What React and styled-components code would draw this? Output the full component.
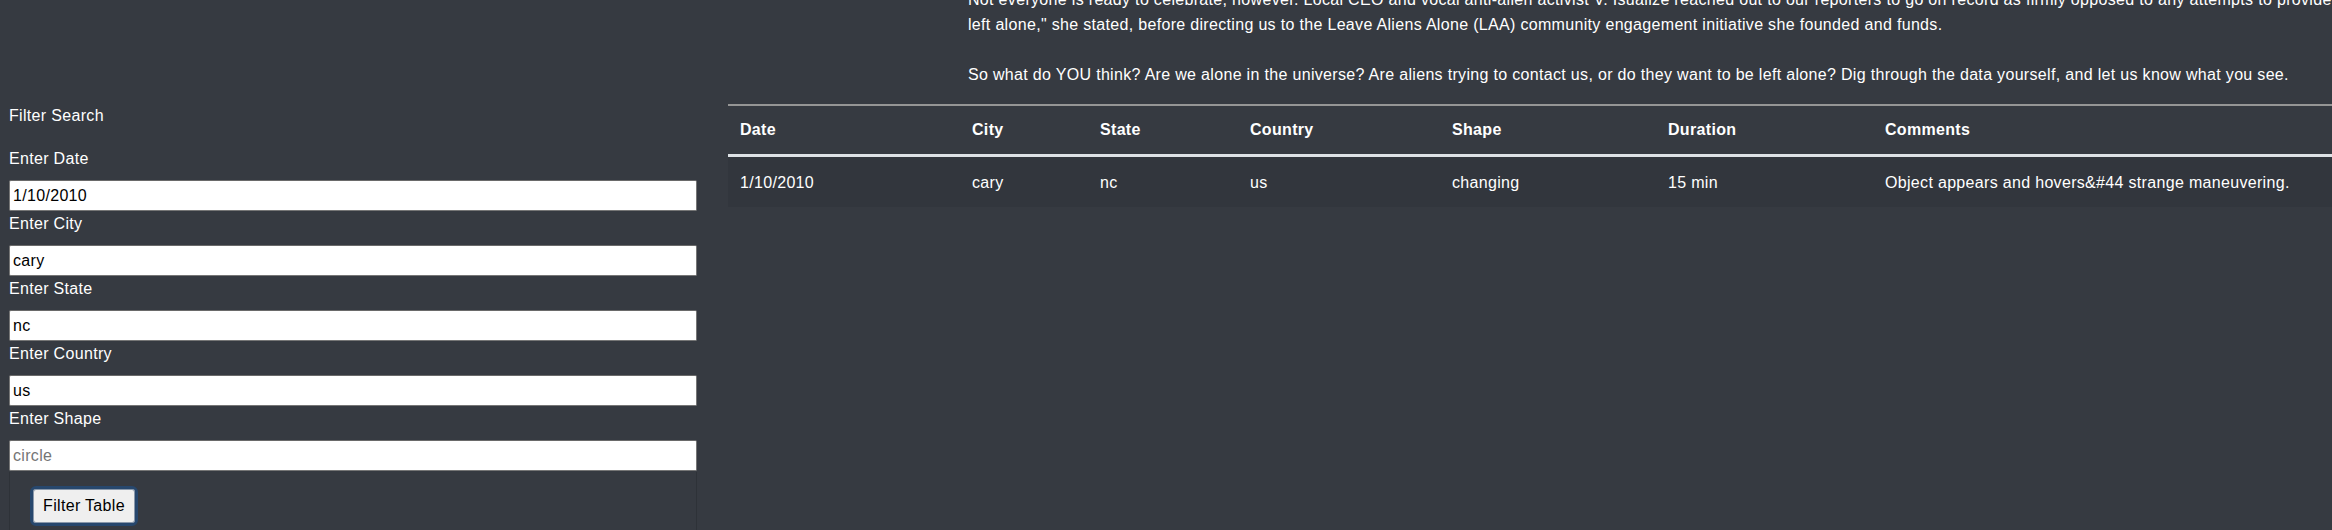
import styled, { createGlobalStyle } from "styled-components";

const GlobalStyle = createGlobalStyle`
  html, body{
    margin: 0;
    padding: 0;
    background: #363a41;
  }
  body{
    font-family: "Liberation Sans", Arial, sans-serif;
    font-size: 16px;
    letter-spacing: 0.32px;
    color: #ffffff;
  }
`
const Page = styled.main`
  width: 2332px;
  height: 530px;
  overflow: hidden;
  background: #363a41;
`
const Story = styled.p`
  margin: -13px 0 17px 968px;
  line-height: 25px;
  white-space: nowrap;
`
const Row = styled.section`
  display: flex;
  gap: 31px;
  align-items: flex-start;
`
const Sidebar = styled.aside`
  box-sizing: border-box;
  width: 697px;
  padding-left: 9px;
  flex-shrink: 0;
  display: flex;
  flex-direction: column;
`
const SideTitle = styled.div`
  line-height: 24px;
  margin-bottom: 19px;
`
const Label = styled.label`
  display: block;
  line-height: 24px;
  margin-bottom: 9px;
`
const Input = styled.input`
  box-sizing: border-box;
  display: block;
  width: 688px;
  height: 31px;
  margin: 0 0 1px;
  padding: 1px 3px;
  border: 1px solid #767676;
  border-top-color: #6a6a6a;
  border-radius: 2px;
  background: #ffffff;
  color: #000000;
  font-family: "Liberation Sans", Arial, sans-serif;
  font-size: 16px;
  letter-spacing: 0.32px;
  &::placeholder{
    color: #757575;
  }
`
const ButtonBox = styled.div`
  width: 688px;
  box-sizing: border-box;
  height: 80px;
  padding: 14px 0 0 20px;
  border-left: 1px solid #2e3238;
  border-right: 1px solid #2e3238;
`
const Button = styled.button`
  box-sizing: border-box;
  width: 108px;
  height: 40px;
  padding: 0;
  border: 3px solid #27476d;
  border-radius: 6px;
  background: #efefef;
  color: #000000;
  font-family: "Liberation Sans", Arial, sans-serif;
  font-size: 16px;
  letter-spacing: 0.32px;
  box-shadow: inset 0 0 0 1px #8a98aa;
`
const TableWrap = styled.div`
  flex: 1;
`
const Table = styled.table`
  width: 100%;
  table-layout: fixed;
  border-collapse: collapse;
`
const Th = styled.th`
  box-sizing: border-box;
  width: ${props => props.w ? props.w + "px" : "auto"};
  padding: 12px;
  text-align: left;
  font-weight: 700;
  line-height: 24px;
  border-top: 2px solid #959595;
  border-bottom: 3px solid #dee2e6;
`
const Td = styled.td`
  padding: 14px 12px 12px;
  line-height: 24px;
  white-space: nowrap;
  background: #32363d;
`

const columns = [
  { name: "Date", w: 232 },
  { name: "City", w: 128 },
  { name: "State", w: 150 },
  { name: "Country", w: 202 },
  { name: "Shape", w: 216 },
  { name: "Duration", w: 217 },
  { name: "Comments" },
]

const sightings = [
  ["1/10/2010", "cary", "nc", "us", "changing", "15 min", "Object appears and hovers&#44 strange maneuvering."],
]

const filters = [
  { id: "datetime", label: "Enter Date", value: "1/10/2010" },
  { id: "city", label: "Enter City", value: "cary" },
  { id: "state", label: "Enter State", value: "nc" },
  { id: "country", label: "Enter Country", value: "us" },
  { id: "shape", label: "Enter Shape", placeholder: "circle" },
]

function App(){
  return(
    <Page>
      <GlobalStyle />
      <Story>
        Not everyone is ready to celebrate, however. Local CEO and vocal anti-alien activist V. Isualize reached out to our reporters to go on record as firmly opposed to any attempts to provide aliens with a welcome. "They're here, and they want to be<br />
        left alone," she stated, before directing us to the Leave Aliens Alone (LAA) community engagement initiative she founded and funds.<br />
        <br />
        So what do YOU think? Are we alone in the universe? Are aliens trying to contact us, or do they want to be left alone? Dig through the data yourself, and let us know what you see.
      </Story>
      <Row>
        <Sidebar>
          <SideTitle>Filter Search</SideTitle>
          {filters.map(f => (
            <div key={f.id}>
              <Label htmlFor={f.id}>{f.label}</Label>
              <Input id={f.id} type="text" defaultValue={f.value} placeholder={f.placeholder} />
            </div>
          ))}
          <ButtonBox>
            <Button type="button">Filter Table</Button>
          </ButtonBox>
        </Sidebar>
        <TableWrap>
          <Table>
            <thead>
              <tr>
                {columns.map(c => <Th key={c.name} w={c.w}>{c.name}</Th>)}
              </tr>
            </thead>
            <tbody>
              {sightings.map((s, i) => (
                <tr key={i}>
                  {s.map((v, j) => <Td key={j}>{v}</Td>)}
                </tr>
              ))}
            </tbody>
          </Table>
        </TableWrap>
      </Row>
    </Page>
  )
}
export default App;
